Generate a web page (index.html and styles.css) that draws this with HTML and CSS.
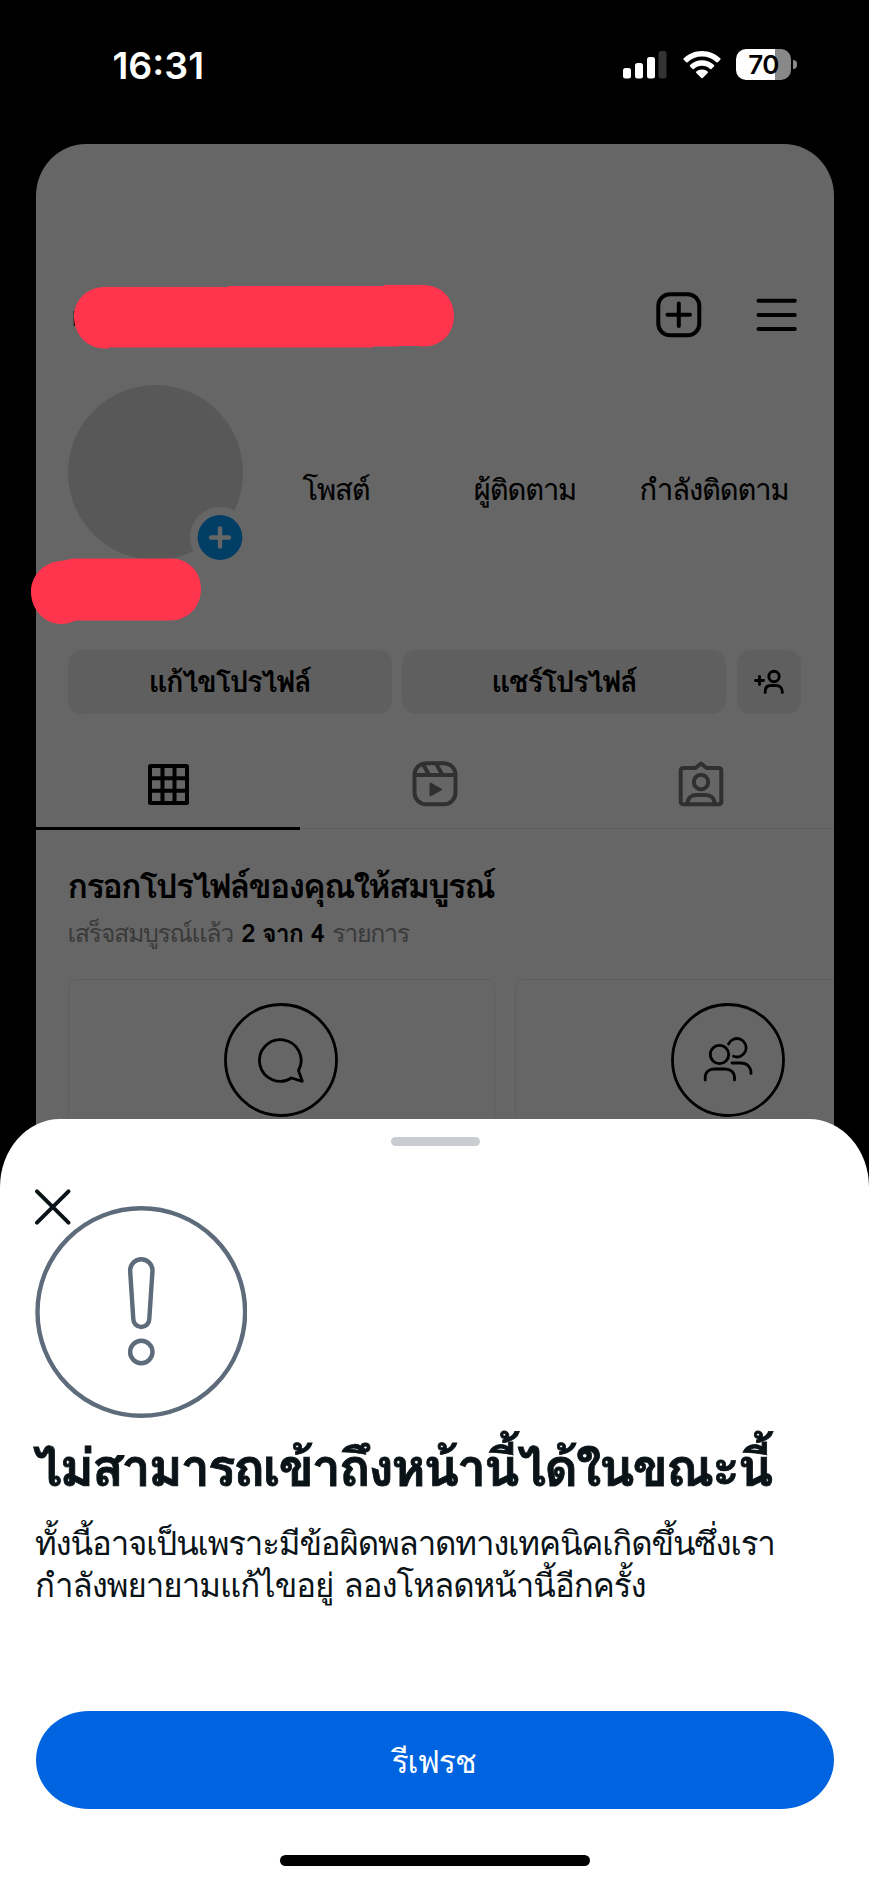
FILE: index.html
```
<!DOCTYPE html>
<html lang="th">
<head>
<meta charset="utf-8">
<title>โปรไฟล์</title>
<link rel="stylesheet" href="styles.css">
</head>
<body>
<div class="phone">
  <header class="status">
    <span class="time">16:31</span>
    <div class="indicators">
      <svg class="signal" width="44" height="28" viewBox="0 0 44 28">
        <g fill="#fff"><rect x="0" y="17" width="8" height="10.500" rx="2.500"/><rect x="12" y="12" width="8" height="15.500" rx="2.500"/><rect x="24" y="6" width="8" height="21.500" rx="2.500"/></g>
        <rect x="35.500" y="0" width="8" height="27.500" rx="2.500" fill="#333"/>
      </svg>
      <svg class="wifi" width="38" height="28" viewBox="0 0 38 28" fill="#fff">
        <path d="M19 0C26 0 32.500 2.800 37.300 7.300Q37.900 8 37.300 8.700L34.800 11.200Q34.100 11.800 33.400 11.200A21 21 0 0 0 4.600 11.200Q3.900 11.800 3.200 11.200L.7 8.700Q.1 8 .7 7.300C5.500 2.800 12 0 19 0Z"/>
        <path d="M19 9.300C23.500 9.300 27.700 11 31 14.100Q31.600 14.800 31 15.500L28.400 18Q27.800 18.600 27.100 18A12 12 0 0 0 10.900 18Q10.200 18.600 9.600 18L7 15.500Q6.400 14.800 7 14.100C10.300 11 14.500 9.300 19 9.300Z"/>
        <path d="M19 18.500C21.300 18.500 23.200 19.300 24.700 20.600Q25.300 21.300 24.700 22L19.700 27Q19 27.700 18.300 27L13.300 22Q12.700 21.300 13.300 20.600C14.800 19.300 16.700 18.500 19 18.500Z"/>
      </svg>
      <div class="battery"><div class="battery-body">70</div><i class="battery-nub"></i></div>
    </div>
  </header>

  <main class="profile">
    <div class="topbar">
      <svg class="scribble" width="382" height="66" viewBox="0 0 382 66">
        <path d="M1.300 26V41" stroke="#000" stroke-width="1.200"/>
        <path d="M32 2H155V1H311V0H350C369 0 381 14 381 31C381 49 368 61.500 350 61.500L346 61H325V61.500H300V62.500H36V63.500H31C14 63.500 1 49 1 32C1 15 14 2 32 2Z" fill="#ff354d"/>
      </svg>
      <div class="actions">
        <svg width="46" height="46" viewBox="0 0 46 46" fill="none" stroke="#000" stroke-width="4" stroke-linecap="round"><rect x="2.300" y="2.300" width="41" height="41" rx="11.500"/><path d="M22.800 11.500V34M11.500 22.800H34"/></svg>
        <svg width="42" height="46" viewBox="0 0 42 46" fill="none" stroke="#000" stroke-width="4" stroke-linecap="round"><path d="M2.500 8.700H38.800M2.500 22.900H38.800M2.500 37.100H38.800"/></svg>
      </div>
    </div>

    <div class="summary">
      <div class="avatar">
        <svg class="badge" width="60" height="60" viewBox="0 0 60 60"><circle cx="30" cy="30" r="30" fill="#666"/><circle cx="30" cy="30.500" r="22.400" fill="#003e66"/><path d="M30 21.500V39.500M21 30.500H39" stroke="#666" stroke-width="4.400" stroke-linecap="round"/></svg>
      </div>
      <div class="stats">
        <span class="stat">โพสต์</span>
        <span class="stat">ผู้ติดตาม</span>
        <span class="stat">กำลังติดตาม</span>
      </div>
    </div>

    <svg class="scribble name-mark" width="171" height="67" viewBox="0 0 171 67">
      <path d="M30 3C36 2 39 .5 46 .5H140C158 .5 170 14 170 31C170 49 157 62.500 139 62.500H47C41 63 39 66 30 66C13 66 0 51 0 34C0 17 13 4 30 3Z" fill="#ff354d"/>
    </svg>

    <div class="buttons">
      <div class="btn">แก้ไขโปรไฟล์</div>
      <div class="btn">แชร์โปรไฟล์</div>
      <div class="btn btn-icon">
        <svg width="32" height="26" viewBox="0 0 32 26" fill="none" stroke="#000" stroke-width="2.900" stroke-linecap="round"><path d="M2.500 11.500H10.500M6.500 7.500V15.500"/><circle cx="21" cy="7.500" r="5.200"/><path d="M12.200 23.500V22.500C12.200 18.500 14.500 16.500 18 16.500H23C26.500 16.500 29.300 18.500 29.300 22.500V23.500"/></svg>
      </div>
    </div>

    <nav class="tabs">
      <div class="tab active">
        <svg width="41" height="41" viewBox="0 0 41 41" fill="none" stroke="#000" stroke-width="4"><rect x="2" y="2" width="37" height="37" rx=".5"/><path d="M14.500 2V39M26.500 2V39M2 14.300H39M2 26.700H39"/></svg>
      </div>
      <div class="tab">
        <svg width="46" height="46" viewBox="0 0 46 46" fill="none" stroke="#303030" stroke-width="4"><rect x="2.500" y="2.300" width="41" height="41" rx="11.500"/><path d="M2.500 14H43.500M11 3L17 14M24 2.500L30.500 14"/><path d="M18.500 22.500V34.500L29 28.500Z" fill="#303030" stroke-width="2" stroke-linejoin="round"/></svg>
      </div>
      <div class="tab">
        <svg width="46" height="46" viewBox="0 0 46 46" fill="none" stroke="#303030" stroke-width="4" stroke-linejoin="round"><path d="M5.500 7H17.500L23 2.500L28.500 7H40.500Q43.300 7 43.300 9.800V40.500Q43.300 43.300 40.500 43.300H5.500Q2.700 43.300 2.700 40.500V9.800Q2.700 7 5.500 7Z"/><circle cx="23" cy="21" r="7.200"/><path d="M9.500 43C9.500 37 13.500 34 18 34H28C32.500 34 36.500 37 36.500 43"/></svg>
      </div>
    </nav>

    <section class="complete">
      <h2 class="complete-title">กรอกโปรไฟล์ของคุณให้สมบูรณ์</h2>
      <p class="complete-sub">เสร็จสมบูรณ์แล้ว <b>2 จาก 4</b> รายการ</p>
      <div class="cards">
        <div class="card">
          <svg width="114" height="114" viewBox="0 0 114 114" fill="none" stroke="#000" stroke-width="2.800" stroke-linejoin="round"><circle cx="57" cy="57" r="55.500"/><path d="M67.500 75A20.800 20.800 0 1 1 74.500 67.500L78.300 78.300Z"/></svg>
        </div>
        <div class="card">
          <svg width="114" height="114" viewBox="0 0 114 114" fill="none" stroke="#000" stroke-width="2.800" stroke-linecap="round"><circle cx="57" cy="57" r="55.500"/><circle cx="48.500" cy="51.500" r="9.200"/><path d="M34.200 77V75C34.200 69 38 66 43 66H54C59.500 66 63.500 69 63.500 75V77"/><path d="M57.500 41A9.200 9.200 0 1 1 62.500 53.300M61 60H69.500C76 60 80 64 80 70.500"/></svg>
        </div>
      </div>
    </section>
  </main>

  <section class="sheet">
    <div class="handle"></div>
    <svg class="close" width="36" height="36" viewBox="0 0 36 36" stroke="#0a1317" stroke-width="3.900" stroke-linecap="round"><path d="M2 2.300L33.500 33.700M33.500 2.300L2 33.700"/></svg>
    <svg class="alert" width="212" height="212" viewBox="0 0 212 212" fill="none" stroke="#5d6b7a" stroke-width="4.400"><circle cx="106.300" cy="106" r="103.800"/><path d="M95.100 64.500A11.200 11.200 0 0 1 117.500 64.500L114.300 113A8 8 0 0 1 98.300 113Z"/><circle cx="106.300" cy="146" r="11.200"/></svg>
    <h1 class="title">ไม่สามารถเข้าถึงหน้านี้ได้ในขณะนี้</h1>
    <p class="body">ทั้งนี้อาจเป็นเพราะมีข้อผิดพลาดทางเทคนิคเกิดขึ้นซึ่งเรา<br><span class="body-last">กำลังพยายามแก้ไขอยู่ ลองโหลดหน้านี้อีกครั้ง</span></p>
    <div class="refresh">รีเฟรช</div>
    <div class="home"></div>
  </section>
</div>
</body>
</html>
```
FILE: styles.css
```
* { box-sizing: border-box; }
body {
  margin: 0;
  background: #000;
  font-family: Loma, "Noto Sans", "Liberation Sans", sans-serif;
  color: #000;
}
svg { display: block; flex: none; }
h1, h2, p { margin: 0; white-space: nowrap; }

.phone {
  width: 869px;
  height: 1884px;
  display: flex;
  flex-direction: column;
  overflow: hidden;
}

/* Status bar */
.status {
  flex: none;
  height: 144px;
  padding: 43px 72px 0 112.500px;
  display: flex;
  justify-content: space-between;
  align-items: flex-start;
}
.time { font: 600 37.500px/45px Inter, sans-serif; color: #fff; }
.indicators { display: flex; padding-top: 6px; gap: 15.500px; }
.signal, .wifi { margin-top: 2px; }
.battery { display: flex; align-items: center; gap: 2px; }
.battery-body {
  width: 55px;
  height: 31px;
  border-radius: 10px;
  background: linear-gradient(90deg, #fff 39px, #888 39px);
  font: 600 26px/32px Inter, sans-serif;
  letter-spacing: -0.500px;
  text-align: center;
}
.battery-nub { width: 4px; height: 9px; border-radius: 0 4px 4px 0; background: #888; }

/* Dimmed profile page; its foot runs under the sheet's rounded corners */
.profile {
  flex: none;
  height: 987px;
  width: 798px;
  margin: 0 auto -12px;
  padding-top: 141px;
  background: #666;
  border-radius: 50px 50px 0 0 / 52px 52px 0 0;
}
.topbar {
  height: 100px;
  padding: 0 36px 0 37px;
  display: flex;
  justify-content: space-between;
}
.actions { display: flex; gap: 54px; padding-top: 6.500px; }

.summary { display: flex; padding-left: 32px; height: 173px; }
.avatar {
  position: relative;
  flex: none;
  width: 175px;
  height: 175px;
  border-radius: 50%;
  background: #585858;
}
.badge { position: absolute; left: 122px; top: 122px; }
.stats {
  flex: none;
  display: grid;
  grid-template-columns: repeat(3, 189px);
  margin-left: -1px;
  padding-top: 85px;
  font-size: 29px;
  line-height: 40px;
  letter-spacing: -1.100px;
  -webkit-text-stroke: 0.200px currentColor;
}
.stat { text-align: center; }
.name-mark { position: relative; margin-left: -5px; }

.buttons { display: flex; gap: 10.500px; padding: 25px 32px 0; }
.btn {
  width: 324px;
  height: 64px;
  border-radius: 14px;
  background: #5f5f5f;
  font-weight: 700;
  font-size: 29px;
  line-height: 65px;
  letter-spacing: -1.300px;
  text-align: center;
}
.btn-icon { width: 64.500px; display: flex; align-items: center; justify-content: center; }

.tabs {
  height: 115px;
  display: grid;
  grid-template-columns: repeat(3, 1fr);
  border-bottom: 1.500px solid #5c5c5c;
}
.tab { display: flex; align-items: center; justify-content: center; padding-top: 25px; }
.tab.active { width: 264.500px; border-bottom: 3px solid #000; padding: 28px 0 0 2px; margin-bottom: -1.500px; }

.complete { padding: 35px 0 0 32px; overflow: hidden; height: 302px; }
.complete-title { font-size: 34px; line-height: 44px; letter-spacing: -1.900px; }
.complete-sub { font-size: 25px; line-height: 36px; letter-spacing: -1.350px; word-spacing: 1.500px; color: #3a3a3a; padding-top: 7px; }
.complete-sub b { color: #000; letter-spacing: -0.900px; word-spacing: 0; }
.cards { display: flex; gap: 20px; padding-top: 28px; }
.card {
  flex: none;
  width: 427px;
  height: 300px;
  border: 1px solid #5e5e5e;
  border-radius: 8px;
  padding-top: 23px;
  display: flex;
  justify-content: center;
  align-items: flex-start;
}

/* Bottom sheet */
.sheet {
  position: relative;
  flex: none;
  height: 765px;
  padding: 17.500px 35.500px 0;
  background: #fff;
  border-radius: 60px 60px 0 0 / 68px 68px 0 0;
  color: #0a1317;
}
.handle { width: 89px; height: 9px; margin: 0 0 0 355.500px; border-radius: 5px; background: #c9ccd1; }
.close { margin: 43.500px 0 0 -0.500px; }
.alert { margin: -19px 0 0 -0.500px; }
.title {
  font-size: 52px;
  line-height: 70px;
  margin: 15px 0 0 -2.500px;
  letter-spacing: -2.150px;
  -webkit-text-stroke: 0.800px currentColor;
}
.body {
  font-size: 33px;
  line-height: 42px;
  margin: 20px 0 0 -0.500px;
  letter-spacing: -1.150px;
}
.body-last { letter-spacing: -1.020px; }
.refresh {
  height: 98px;
  margin-top: 104px;
  border-radius: 53px / 49px;
  background: #0064e0;
  color: #fff;
  text-align: center;
  font-size: 32px;
  line-height: 102px;
  letter-spacing: -1.100px;
  text-indent: -2px;
}
.home { width: 310px; height: 11px; margin: 46px auto 0; border-radius: 6px; background: #000; }
```
